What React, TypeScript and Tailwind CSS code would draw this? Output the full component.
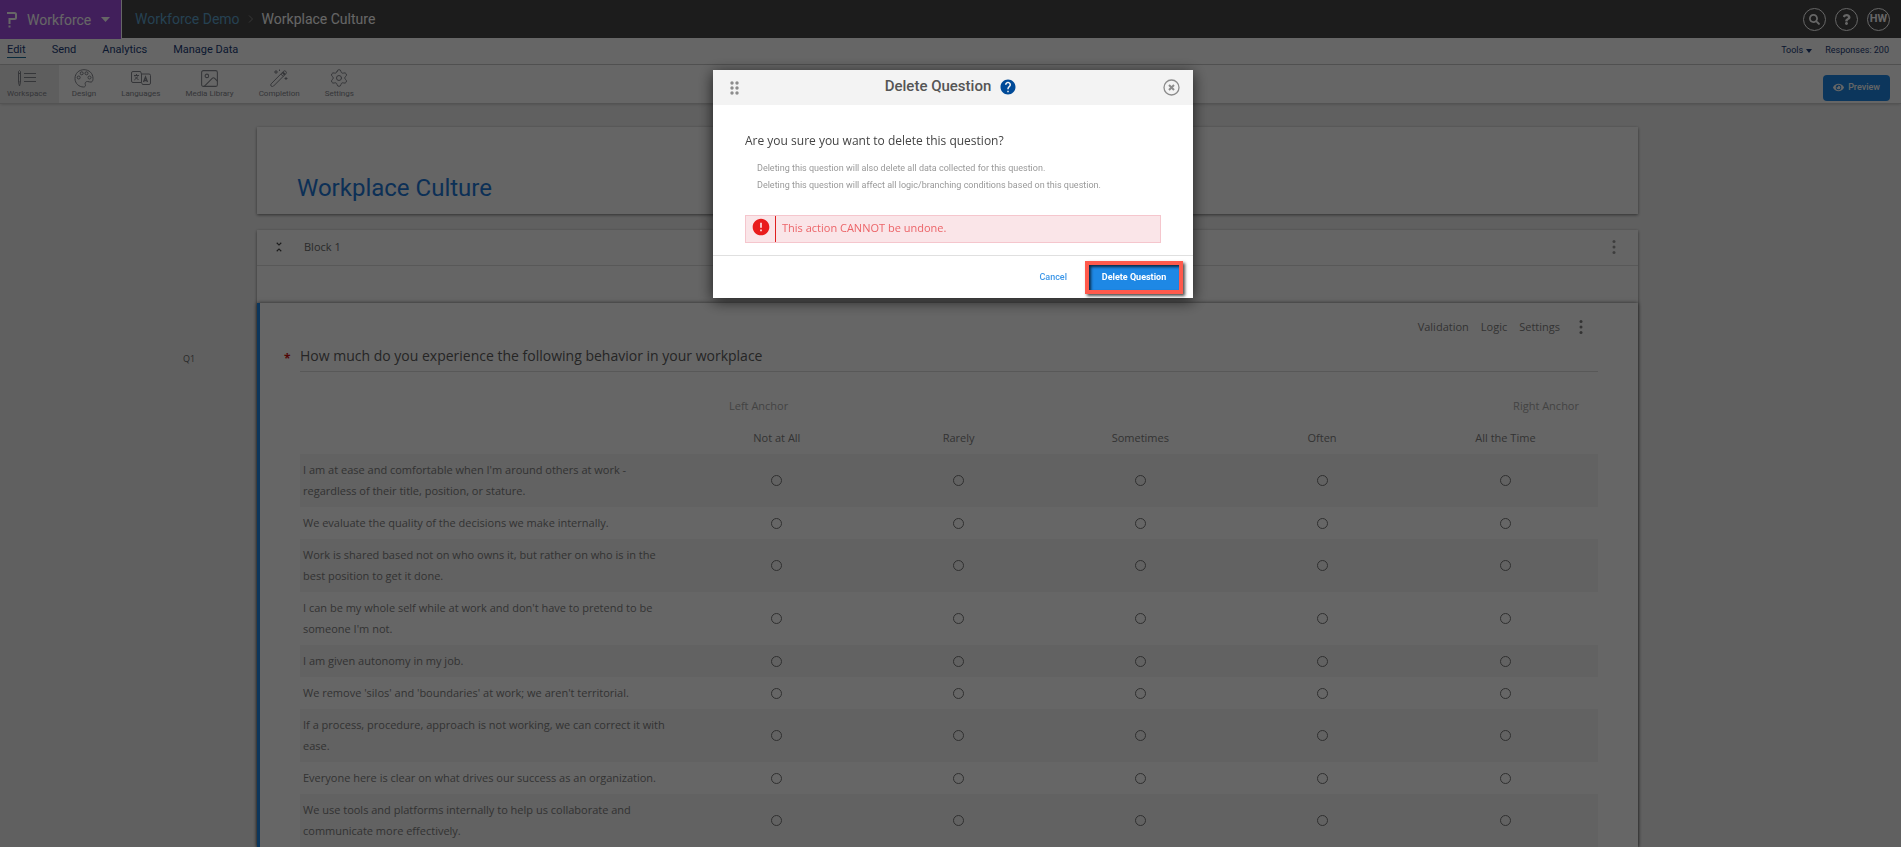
import React, { useState } from "react";
import { Image as ImageIcon, Settings } from "lucide-react";
import { FaEye, FaQuestion, FaSearch } from "react-icons/fa";
import { MdError, MdHelp, MdUnfoldLess } from "react-icons/md";

const scale = ["Not at All", "Rarely", "Sometimes", "Often", "All the Time"];

const statements = [
  "I am at ease and comfortable when I'm around others at work - regardless of their title, position, or stature.",
  "We evaluate the quality of the decisions we make internally.",
  "Work is shared based not on who owns it, but rather on who is in the best position to get it done.",
  "I can be my whole self while at work and don't have to pretend to be someone I'm not.",
  "I am given autonomy in my job.",
  "We remove 'silos' and 'boundaries' at work; we aren't territorial.",
  "If a process, procedure, approach is not working, we can correct it with ease.",
  "Everyone here is clear on what drives our success as an organization.",
  "We use tools and platforms internally to help us collaborate and communicate more effectively.",
];

function WorkspaceIcon() {
  return (
    <svg width="20" height="18" viewBox="0 0 20 18" fill="none" stroke="currentColor">
      <path d="M1.500 2.500q1-2 2 0v11l-1 3.500l-1-3.500z" />
      <path d="M1.500 4.500h2M1.500 13h2" />
      <path d="M7 4.500h12M7 8.500h12M7 12.500h12" />
    </svg>
  );
}

function PaletteIcon() {
  return (
    <svg width="20" height="19" viewBox="0 0 20 19" fill="none" stroke="currentColor">
      <path d="M10 .7C4.900.7 1 4.300 1 9.500C1 14.500 5 18 9.500 18c1.700 0 2.300-1.200 1.800-2.500c-.6-1.700.4-3 2.200-3c1.500 0 2.300.8 3.700.6C18.600 12.800 19 11 19 9.500C19 4.300 15.100.7 10 .7z" />
      <circle cx="4.700" cy="8.500" r="1.500" />
      <circle cx="7.700" cy="4.300" r="1.500" />
      <circle cx="12.500" cy="4.300" r="1.500" />
      <circle cx="15.500" cy="8.500" r="1.500" />
    </svg>
  );
}

function LanguagesIcon() {
  return (
    <svg width="20" height="16" viewBox="0 0 20 16" fill="none" stroke="currentColor">
      <path d="M10.500 12.500H2A1.500 1.500 0 0 1 .5 11V3A1.500 1.500 0 0 1 2 1.500h7.500l1 2.500" />
      <path d="M10.500 4H18a1.500 1.500 0 0 1 1.500 1.500V13a1.500 1.500 0 0 1-1.500 1.500h-6.500l-1-2z" />
      <path d="M3 5.500h5M5.500 4v1.500M4 6.500l3.500 3.500M7 6.500l-3.700 3.500" />
      <path d="M12.500 12l2-5l2 5M13.300 10.500h2.600" strokeWidth="1.300" />
    </svg>
  );
}

function WandIcon() {
  return (
    <svg width="18" height="18" viewBox="0 0 18 18" fill="none" stroke="currentColor">
      <path d="M1.200 14.800L13.500 2.300a1.700 1.700 0 0 1 2.400 2.400L3.500 17.100a1.600 1.600 0 0 1-2.300-2.300z" />
      <path d="M10.800 5l2.500 2.500" />
      <path d="M12.500 3.300l2.500 2.500" strokeWidth="2" />
      <path d="M6 1v4M4 3h4M16 8v3M14.500 9.500h3M9.500 .5v1.500" />
    </svg>
  );
}

const tools = [
  { name: "Workspace", icon: <WorkspaceIcon /> },
  { name: "Design", icon: <PaletteIcon /> },
  { name: "Languages", icon: <LanguagesIcon /> },
  { name: "Media Library", icon: <ImageIcon size={21} strokeWidth={1.2} /> },
  { name: "Completion", icon: <WandIcon /> },
  { name: "Settings", icon: <Settings size={20} strokeWidth={1.2} /> },
];

function Kebab() {
  return (
    <svg width="4" height="16" viewBox="0 0 4 16" fill="currentColor">
      <circle cx="2" cy="2.500" r="1.500" />
      <circle cx="2" cy="8" r="1.500" />
      <circle cx="2" cy="13.500" r="1.500" />
    </svg>
  );
}

function Caret() {
  return (
    <svg width="9" height="5" viewBox="0 0 9 5" fill="currentColor">
      <path d="M0 0h9L4.500 5z" />
    </svg>
  );
}

function TopBar() {
  return (
    <header className="flex h-[38px] items-start justify-between bg-[#464646]">
      <div className="flex items-center">
        <button className="flex h-[39px] w-[122px] items-center border-r border-white bg-[#a34fe3] pl-[7px] text-white">
          <svg width="11" height="17" viewBox="0 0 11 17" fill="none" stroke="currentColor" strokeWidth="2">
            <path d="M0 2h7.500a1.500 1.500 0 0 1 1.500 1.500v3a1.500 1.500 0 0 1-1.500 1.500h-5v5" />
            <path d="M1.500 15.500h2" />
          </svg>
          <span className="ml-[9px] text-sm">Workforce</span>
          <span className="ml-[10px]">
            <Caret />
          </span>
        </button>
        <nav className="flex items-center pb-[2px] pl-[13px] text-sm" aria-label="Breadcrumb">
          <a href="#" className="text-[#5fa3cc]">
            Workforce Demo
          </a>
          <svg className="mx-2" width="6" height="8" viewBox="0 0 6 8" fill="none" stroke="#8a8a8a">
            <path d="M1 .5l3.500 3.500l-3.500 3.500" />
          </svg>
          <span className="text-white">Workplace Culture</span>
        </nav>
      </div>
      <div className="flex gap-[9px] pt-2 pr-[11px] text-white">
        <button aria-label="Search" className="grid size-[23px] place-items-center rounded-full border border-white">
          <FaSearch size={11} />
        </button>
        <button aria-label="Help" className="grid size-[23px] place-items-center rounded-full border border-white">
          <FaQuestion size={11} />
        </button>
        <button className="grid size-[23px] place-items-center rounded-full border border-white text-[11px] font-bold">
          HW
        </button>
      </div>
    </header>
  );
}

function NavBar() {
  return (
    <div className="flex h-[27px] items-center justify-between border-b border-[#cccccc] bg-white pr-3 pl-[7px] text-[#1c3c78]">
      <nav className="flex gap-[26px] pb-[2px] text-[11px] leading-[14px]">
        <a href="#" className="border-b border-[#1c6c98]">
          Edit
        </a>
        <a href="#">Send</a>
        <a href="#">Analytics</a>
        <a href="#">Manage Data</a>
      </nav>
      <div className="flex gap-[13px] pb-px text-[9px]">
        <button className="flex items-center gap-[3px]">
          Tools
          <svg width="6" height="4" viewBox="0 0 6 4" fill="currentColor">
            <path d="M0 0h6L3 4z" />
          </svg>
        </button>
        <span>Responses: 200</span>
      </div>
    </div>
  );
}

function ToolBar() {
  return (
    <div className="relative flex items-center justify-between border-b border-[#d0d0d0] bg-white pr-[11px] shadow">
      <div className="flex text-[8px] leading-3 text-[#85878e]">
        {tools.map((tool, index) => (
          <button
            key={tool.name}
            className={`flex h-[38px] flex-col items-center pt-[3px] ${
              index === 0 ? "bg-[#ebebeb] pr-3 pl-[7px]" : "pr-3 pl-[13px]"
            }`}
          >
            <span className="grid h-5 place-items-center">{tool.icon}</span>
            <span>{tool.name}</span>
          </button>
        ))}
      </div>
      <button className="mt-[7px] flex h-[26px] items-center gap-1 rounded-sm bg-[#1e88e5] px-[10px] text-[9px] font-medium text-white">
        <FaEye size={11} />
        Preview
      </button>
    </div>
  );
}

function QuestionTable() {
  return (
    <table className="w-full table-fixed text-[11px] leading-[21px] text-[#7f7f7f]">
      <colgroup>
        <col className="w-[386px]" />
        <col className="w-[14%]" />
        <col className="w-[14%]" />
        <col className="w-[14%]" />
        <col className="w-[14%]" />
        <col />
      </colgroup>
      <thead>
        <tr>
          <th className="h-[33px]"></th>
          {scale.map((item) => (
            <th key={item} scope="col" className="h-[33px] pb-px font-normal">
              {item}
            </th>
          ))}
        </tr>
      </thead>
      <tbody>
        {statements.map((statement, row) => (
          <tr key={statement} className="odd:bg-[#f4f4f4]">
            <th scope="row" className="pt-[5px] pr-3 pb-[6px] pl-[3px] text-left font-normal">
              {statement}
            </th>
            {scale.map((item) => (
              <td key={item}>
                <input
                  type="radio"
                  name={`row-${row}`}
                  aria-label={`${statement} ${item}`}
                  className="mx-auto block size-[11px] appearance-none rounded-full border border-[#777777]"
                />
              </td>
            ))}
          </tr>
        ))}
      </tbody>
    </table>
  );
}

function Survey() {
  return (
    <main className="flex pt-[23px] pr-[263px] pl-[183px] font-['Open_Sans',sans-serif]">
      <div className="w-[74px] shrink-0 pt-[224px] text-[9px] leading-4 text-[#666666]">Q1</div>
      <div className="min-w-0 flex-1">
        <section className="bg-[#fcfcfc] px-10 pt-[45px] pb-[10px] shadow-[0_1px_3px_rgba(0,0,0,0.5)]">
          <h1 className="font-[Roboto,sans-serif] text-2xl text-[#1e78d8]">Workplace Culture</h1>
        </section>
        <section className="mt-4 bg-[#fcfcfc] shadow-[0_1px_3px_rgba(0,0,0,0.5)]">
          <div className="flex h-[36px] items-center border-b border-[#dddddd] pr-[22px] pb-px pl-[15px] text-[#6a6a6a]">
            <button aria-label="Collapse block" className="text-[#444444]">
              <MdUnfoldLess size={14} />
            </button>
            <h2 className="ml-[18px] flex-1 text-[11px]">Block 1</h2>
            <button aria-label="Block menu" className="text-[#9a9a9a]">
              <Kebab />
            </button>
          </div>
          <div className="h-[37px]"></div>
          <div className="border-l-3 border-[#1e88e5] bg-white pr-10 pl-[24px] shadow-[0_0_4px_rgba(0,0,0,0.6)]">
            <div className="flex items-center justify-end gap-3 pt-[14px] pr-[15px] text-[11px] leading-5 text-[#7f7f7f]">
              <button>Validation</button>
              <button>Logic</button>
              <button>Settings</button>
              <button aria-label="Question menu" className="ml-[7px]">
                <Kebab />
              </button>
            </div>
            <div className="flex pt-[7px]">
              <span className="w-4 shrink-0 pt-[3px] text-xs leading-6 font-bold text-[#cc1111]">*</span>
              <h3 className="flex-1 border-b border-[#dddddd] pb-[3px] text-sm leading-6 text-[#5c5c5c]">
                How much do you experience the following behavior in your workplace
              </h3>
            </div>
            <div className="pl-4">
              <div className="flex justify-between pt-[23px] pr-[19px] pl-[429px] text-[11px] leading-[21px] text-[#a8a8a8]">
                <span>Left Anchor</span>
                <span>Right Anchor</span>
              </div>
              <div className="pt-[5px]">
                <QuestionTable />
              </div>
            </div>
          </div>
        </section>
      </div>
    </main>
  );
}

function DeleteDialog({ onClose }: any) {
  return (
    <div className="fixed inset-0 bg-black/60 pt-[70px] pl-[5px]">
      <div
        role="dialog"
        aria-labelledby="dialog-title"
        className="mx-auto w-[480px] bg-white shadow-[0_3px_14px_rgba(0,0,0,0.7)]"
      >
        <div className="flex h-[35px] items-center justify-between bg-[#f3f3f3] pr-[13px] pl-[17px]">
          <svg width="9" height="14" viewBox="0 0 9 14" fill="#8c8c8c">
            <circle cx="2" cy="2" r="1.700" />
            <circle cx="7" cy="2" r="1.700" />
            <circle cx="2" cy="7" r="1.700" />
            <circle cx="7" cy="7" r="1.700" />
            <circle cx="2" cy="12" r="1.700" />
            <circle cx="7" cy="12" r="1.700" />
          </svg>
          <div className="flex items-center gap-2 pb-0.5">
            <h2 id="dialog-title" className="text-[15px] font-medium text-[#555555]">
              Delete Question
            </h2>
            <MdHelp size={18} color="#004a98" />
          </div>
          <button aria-label="Close" onClick={onClose}>
            <svg width="17" height="17" viewBox="0 0 17 17" fill="none" stroke="#8c8c8c">
              <circle cx="8.500" cy="8.500" r="7.500" strokeWidth="1.300" />
              <path d="M6 6l5 5M11 6l-5 5" strokeWidth="2" />
            </svg>
          </button>
        </div>
        <div className="px-8 pt-[26px] pb-3">
          <p className="font-['Open_Sans',sans-serif] text-[12px] leading-5 text-[#444444]">
            Are you sure you want to delete this question?
          </p>
          <ul className="pt-[9px] pl-3 text-[9px] leading-[17px] text-[#999999]">
            <li>Deleting this question will also delete all data collected for this question.</li>
            <li>Deleting this question will affect all logic/branching conditions based on this question.</li>
          </ul>
          <div className="mt-[21px] flex h-7 border border-[#f5c6cd] bg-[#fae5e8]">
            <span className="flex w-[30px] justify-center border-r border-[#e02020] pt-px">
              <MdError size={20} color="#e91c1c" />
            </span>
            <span className="pl-[6px] font-['Open_Sans',sans-serif] text-[11px] leading-6 text-[#ec6468]">
              This action CANNOT be undone.
            </span>
          </div>
        </div>
        <div className="flex items-center justify-end gap-[18px] border-t border-[#e0e0e0] pt-[5px] pr-[10px] pb-1 text-[9px] font-medium">
          <button onClick={onClose} className="text-[#3d97e8]">
            Cancel
          </button>
          <button
            onClick={onClose}
            className="h-[33px] w-[98px] border-4 border-[#ff5a4c] bg-[#1e88e5] font-bold text-white shadow-[2px_2px_3px_rgba(0,0,0,0.7),inset_2px_2px_3px_rgba(0,0,0,0.7)]"
          >
            Delete Question
          </button>
        </div>
      </div>
    </div>
  );
}

function App() {
  const [isOpen, setIsOpen] = useState(true);

  return (
    <div className="h-screen overflow-hidden bg-[#f1f1f1] font-[Roboto,'Open_Sans',sans-serif]">
      <TopBar />
      <NavBar />
      <ToolBar />
      <Survey />
      {isOpen && <DeleteDialog onClose={() => setIsOpen(false)} />}
    </div>
  );
}

export default App;
